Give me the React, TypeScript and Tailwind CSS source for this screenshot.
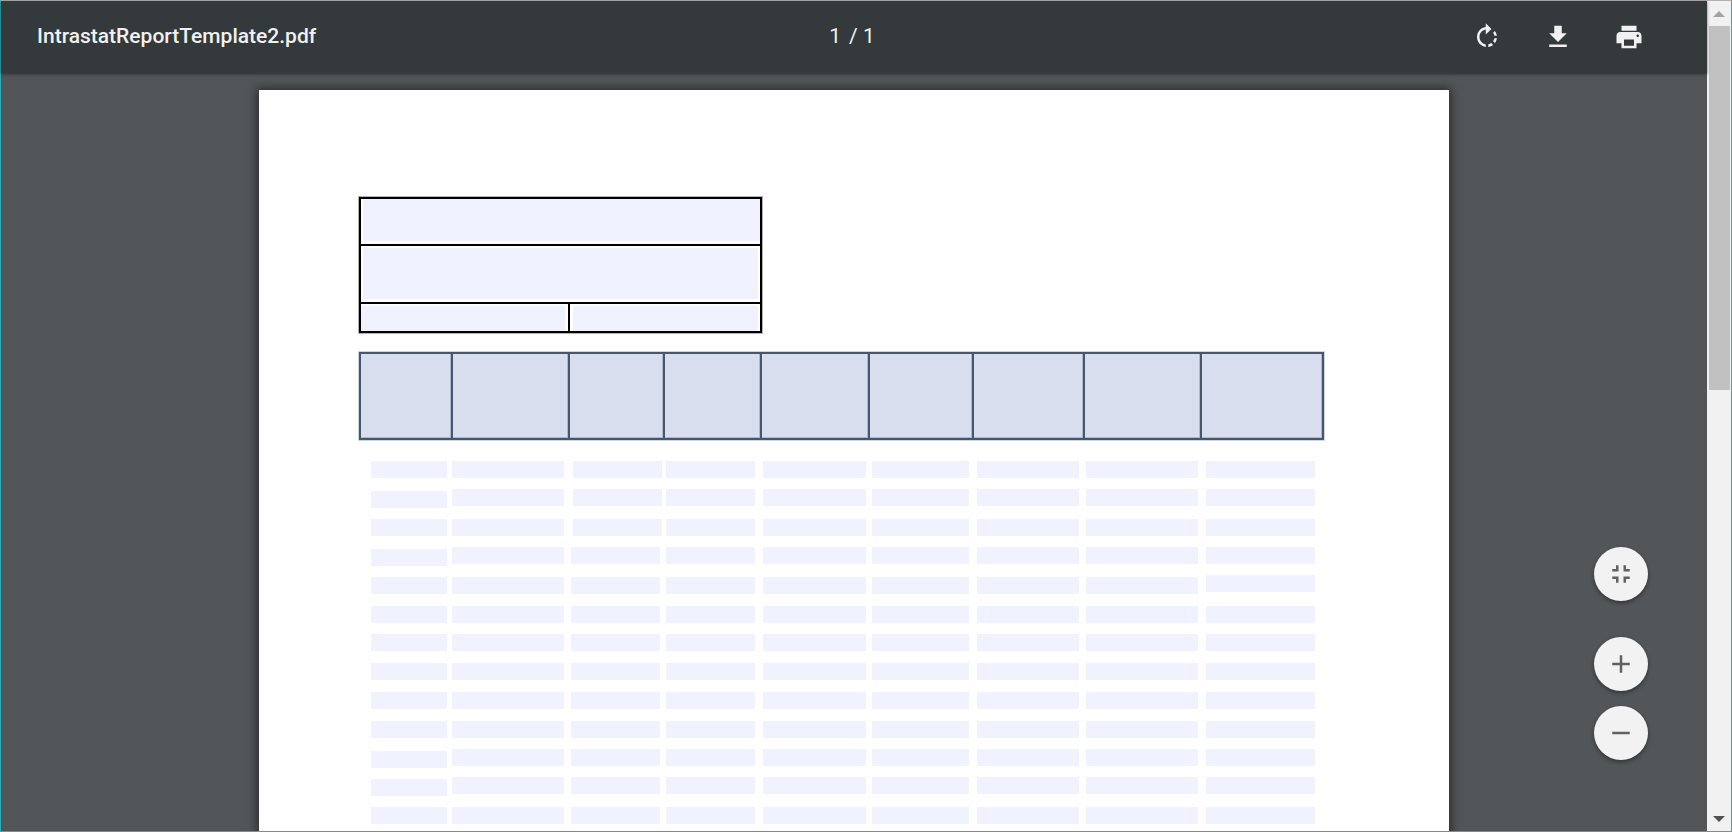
import { useState } from "react";
import type { ReactNode } from "react";
import {
  MdAdd,
  MdFileDownload,
  MdFullscreenExit,
  MdPrint,
  MdRemove,
  MdRotateRight,
} from "react-icons/md";

const HEADER_COUNT = 9;

type Row = { height: string; low: number[] };

/* Heights are the distance to the next row; "low" lists the columns set at the row's lower edge. */
const ROWS: Row[] = [
  { height: "h-7", low: [] },
  { height: "h-[30px]", low: [0] },
  { height: "h-7", low: [] },
  { height: "h-7", low: [0] },
  { height: "h-[31px]", low: [0, 1, 2, 3, 4, 5, 6, 7] },
  { height: "h-7", low: [] },
  { height: "h-[29px]", low: [] },
  { height: "h-[29px]", low: [] },
  { height: "h-[29px]", low: [] },
  { height: "h-7", low: [] },
  { height: "h-7", low: [0] },
  { height: "h-[30px]", low: [0] },
  { height: "h-[29px]", low: [] },
  { height: "h-[29px]", low: [] },
  { height: "h-[29px]", low: [] },
  { height: "h-[29px]", low: [] },
  { height: "h-[29px]", low: [] },
  { height: "h-[29px]", low: [] },
];

const CELL_PADDING = ["pr-[5px]", "pr-[7px]", "pr-1.5", "pr-2", "pr-1.5", "pr-2", "pr-[7px]", "pr-2", ""];

function ToolbarButton({ label, children }: { label: string; children: ReactNode }) {
  return (
    <button type="button" aria-label={label} className="flex size-12 items-center justify-center text-[#f1f1f1]">
      {children}
    </button>
  );
}

function RoundButton({ label, onClick, children }: { label: string; onClick?: () => void; children: ReactNode }) {
  return (
    <button
      type="button"
      aria-label={label}
      onClick={onClick}
      className="flex size-[54px] items-center justify-center rounded-full bg-[#f2f2f2] text-[#616161] shadow-[0_2px_4px_rgba(0,0,0,0.4)]"
    >
      {children}
    </button>
  );
}

function Field({ label, className }: { label: string; className: string }) {
  return <input type="text" aria-label={label} className={`block min-w-0 px-1 text-xs outline-none ${className}`} />;
}

function CompanyBox() {
  return (
    <div className="w-[403px] border-2 border-black ring-1 ring-black/30">
      <div className="h-[45px] pb-[3px] pl-0.5">
        <Field label="Company" className="h-full w-full bg-[#f0f3ff]" />
      </div>
      <div className="h-[58px] border-t-2 border-black px-0.5 pt-0.5 pb-[3px]">
        <Field label="Address" className="h-full w-full bg-[#f0f3ff]" />
      </div>
      <div className="flex h-[29px] border-t-2 border-black">
        <div className="w-[207px] pt-0.5 pr-[3px]">
          <Field label="Period" className="h-full w-full bg-[#f0f3ff]" />
        </div>
        <div className="flex-1 border-l-2 border-black pt-0.5 pr-0.5 pl-[3px]">
          <Field label="Reference" className="h-full w-full bg-[#f0f3ff]" />
        </div>
      </div>
    </div>
  );
}

function HeaderRow() {
  return (
    <div className="mt-[19px] grid h-[88px] grid-cols-[92fr_117fr_95fr_97fr_108fr_104fr_111fr_117fr_122fr] border-y-2 border-r-2 border-[#45566f] ring-1 ring-[#45566f]/25">
      {Array.from({ length: HEADER_COUNT }, (_, i) => (
        <div key={i} className="min-w-0 border-l-2 border-[#45566f]">
          <Field
            label={`Heading ${i + 1}`}
            className="h-full w-full border-r border-b border-[#b0b9ca] bg-[#d8deee]"
          />
        </div>
      ))}
    </div>
  );
}

function FieldRows() {
  return (
    <div className="mt-[21px] pr-[9px] pl-3">
      {ROWS.map((row, r) => (
        <div key={r} className={row.height}>
          <div className="grid h-[19px] grid-cols-[81fr_119fr_95fr_97fr_109fr_105fr_109fr_120fr_109fr]">
            {CELL_PADDING.map((padding, c) => (
              <div
                key={c}
                className={`flex min-w-0 ${row.low.includes(c) ? "items-end" : "items-start"} ${
                  c === 2 && r < 3 ? "pr-1 pl-0.5" : padding
                }`}
              >
                <Field label={`Row ${r + 1}, column ${c + 1}`} className="h-[17px] w-full bg-[#f0f3ff]" />
              </div>
            ))}
          </div>
        </div>
      ))}
    </div>
  );
}

export default function App() {
  const [zoom, setZoom] = useState(1);

  return (
    <div className="flex h-screen border border-[#1cb4bf] border-t-[#b1b1b1] bg-[#525659] font-['Roboto',sans-serif]">
      <div className="relative flex min-w-0 flex-1 flex-col">
        <header className="z-10 grid h-[72px] shrink-0 grid-cols-[1fr_auto_1fr] items-center bg-[#34393b] pr-10 pl-9 text-[21px] text-[#f1f1f1] shadow-[0_1px_3px_rgba(0,0,0,0.5)]">
          <h1 className="truncate font-medium">IntrastatReportTemplate2.pdf</h1>
          <div className="flex gap-2">
            <span>1</span>
            <span>/ 1</span>
          </div>
          <div className="flex justify-end gap-[23px] pr-3.5">
            <ToolbarButton label="Rotate clockwise">
              <MdRotateRight size={30} />
            </ToolbarButton>
            <ToolbarButton label="Download">
              <MdFileDownload size={30} />
            </ToolbarButton>
            <ToolbarButton label="Print">
              <MdPrint size={30} />
            </ToolbarButton>
          </div>
        </header>

        <main className="flex-1 overflow-y-auto px-4 [scrollbar-width:none]">
          <div
            className="mx-auto mt-[17px] h-[1682px] w-full max-w-[1190px] bg-white pt-[107px] pr-[125px] pl-[100px] shadow-[0_0_9px_2px_rgba(0,0,0,0.5)]"
            style={{ zoom }}
          >
            <CompanyBox />
            <HeaderRow />
            <FieldRows />
          </div>
        </main>

        <div className="absolute right-[59px] bottom-[71px] z-10 flex flex-col">
          <RoundButton label="Fit to page" onClick={() => setZoom(1)}>
            <MdFullscreenExit size={30} />
          </RoundButton>
          <div className="mt-9 flex flex-col gap-[15px]">
            <RoundButton label="Zoom in" onClick={() => setZoom((z) => Math.min(z + 0.1, 3))}>
              <MdAdd size={30} />
            </RoundButton>
            <RoundButton label="Zoom out" onClick={() => setZoom((z) => Math.max(z - 0.1, 0.3))}>
              <MdRemove size={30} />
            </RoundButton>
          </div>
        </div>
      </div>

      <div aria-hidden="true" className="flex w-6 shrink-0 flex-col bg-[#f1f1f1]">
        <div className="flex h-[25px] items-center justify-center">
          <svg width="12" height="6" viewBox="0 0 12 6" fill="#a3a3a3">
            <path d="M6 0 12 6H0Z" />
          </svg>
        </div>
        <div className="flex flex-1 flex-col px-0.5">
          <div className="w-[21px] flex-7 bg-[#c1c1c1]" />
          <div className="flex-8" />
        </div>
        <div className="flex h-[25px] items-center justify-center">
          <svg width="12" height="6" viewBox="0 0 12 6" fill="#505050">
            <path d="M0 0H12L6 6Z" />
          </svg>
        </div>
      </div>
    </div>
  );
}
